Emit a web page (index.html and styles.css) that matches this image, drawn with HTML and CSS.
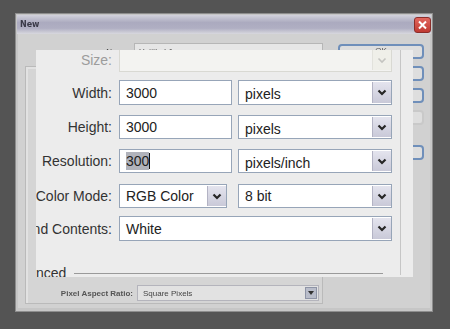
FILE: index.html
```html
<!DOCTYPE html>
<html>
<head>
<meta charset="utf-8">
<link rel="stylesheet" href="styles.css">
</head>
<body>
<div class="window">
  <div class="titlebar">
    <span class="title">New</span>
    <span class="close">
      <svg width="11" height="10" viewBox="0 0 11 10"><path d="M2 1.5 L9 8.5 M9 1.5 L2 8.5" stroke="#fff" stroke-width="2" fill="none"/></svg>
    </span>
  </div>
  <div class="dlg">
    <div class="main">
      <div class="name-row">
        <span class="name-label">Name:</span>
        <span class="name-field">Untitled-1</span>
      </div>
      <div class="group">
        <div class="par-row">
          <span class="par-label">Pixel Aspect Ratio:</span>
          <span class="par-select">Square Pixels<span class="par-arrow"><svg width="6" height="4" viewBox="0 0 6 4"><path d="M0 0 H6 L3 4 Z" fill="#333"/></svg></span></span>
        </div>
      </div>
    </div>
    <div class="buttons">
      <span class="btn">OK</span>
      <span class="btn">Cancel</span>
      <span class="btn">Save Preset...</span>
      <span class="btn btn-off">Delete Preset...</span>
      <span class="btn btn-far">Device Central...</span>
    </div>
  </div>
</div>

<div class="zoom">
  <div class="zoom-inner">
    <div class="row row-size">
      <span class="lbl lbl-off">Size:</span>
      <span class="field field-full field-off"><span class="val"></span><span class="arrow arrow-off"><svg width="10" height="7" viewBox="0 0 10 7"><path d="M1.5 1.5 L5 5 L8.5 1.5" fill="none" stroke="#c4c4c0" stroke-width="1.6"/></svg></span></span>
    </div>
    <div class="row row-width">
      <span class="lbl">Width:</span>
      <span class="field field-in"><span class="val">3000</span></span>
      <span class="field field-sel"><span class="val val-sel">pixels</span><span class="arrow"><svg width="10" height="7" viewBox="0 0 10 7"><path d="M1.5 1.5 L5 5 L8.5 1.5" fill="none" stroke="#262626" stroke-width="2.2"/></svg></span></span>
    </div>
    <div class="row">
      <span class="lbl">Height:</span>
      <span class="field field-in"><span class="val">3000</span></span>
      <span class="field field-sel"><span class="val val-sel">pixels</span><span class="arrow"><svg width="10" height="7" viewBox="0 0 10 7"><path d="M1.5 1.5 L5 5 L8.5 1.5" fill="none" stroke="#262626" stroke-width="2.2"/></svg></span></span>
    </div>
    <div class="row">
      <span class="lbl">Resolution:</span>
      <span class="field field-in"><span class="val"><span class="hl">300</span><span class="caret"></span></span></span>
      <span class="field field-sel"><span class="val val-sel">pixels/inch</span><span class="arrow"><svg width="10" height="7" viewBox="0 0 10 7"><path d="M1.5 1.5 L5 5 L8.5 1.5" fill="none" stroke="#262626" stroke-width="2.2"/></svg></span></span>
    </div>
    <div class="row row-mode">
      <span class="lbl">Color Mode:</span>
      <span class="field field-mode"><span class="val">RGB Color</span><span class="arrow"><svg width="10" height="7" viewBox="0 0 10 7"><path d="M1.5 1.5 L5 5 L8.5 1.5" fill="none" stroke="#262626" stroke-width="2.2"/></svg></span></span>
      <span class="field field-sel"><span class="val">8 bit</span><span class="arrow"><svg width="10" height="7" viewBox="0 0 10 7"><path d="M1.5 1.5 L5 5 L8.5 1.5" fill="none" stroke="#262626" stroke-width="2.2"/></svg></span></span>
    </div>
    <div class="row row-bg">
      <span class="lbl">Background Contents:</span>
      <span class="field field-full"><span class="val">White</span><span class="arrow"><svg width="10" height="7" viewBox="0 0 10 7"><path d="M1.5 1.5 L5 5 L8.5 1.5" fill="none" stroke="#262626" stroke-width="2.2"/></svg></span></span>
    </div>
    <div class="adv">
      <span class="adv-title">Advanced</span>
      <span class="adv-line"></span>
    </div>
  </div>
</div>
</body>
</html>
```

FILE: styles.css
```css
html, body {
  margin: 0;
  padding: 0;
}
body {
  width: 450px;
  height: 329px;
  background: #545454;
  overflow: hidden;
  font-family: "Liberation Sans", Arial, sans-serif;
}

/* background dialog */
.window {
  margin: 13px 0 0 15px;
  width: 416px;
  height: 297px;
  border: 1px solid #8d8d8d;
  background: #c6c6c6;
  display: flex;
  flex-direction: column;
  filter: blur(0.5px);
}
.titlebar {
  height: 19px;
  margin: 1px 1px 0 1px;
  background: linear-gradient(to bottom, #d2d2dc 0%, #abaabf 40%, #b0afc3 70%, #d8d8de 100%);
  display: flex;
  align-items: center;
  justify-content: space-between;
  padding: 0 0 0 3px;
}
.title {
  font-family: "DejaVu Sans", sans-serif;
  font-size: 8px;
  font-weight: bold;
  color: #3a3a48;
}
.close {
  width: 17px;
  height: 16px;
  box-sizing: border-box;
  border: 1px solid #8b2e2a;
  border-radius: 3px;
  background: linear-gradient(to bottom, #e2675f, #c03a33);
  display: flex;
  align-items: center;
  justify-content: center;
}
.dlg {
  flex: 1;
  margin: 0 2px 3px 2px;
  background: #d1d1d1;
  display: flex;
  padding: 9px 6px 0 7px;
  gap: 15px;
}
.main {
  width: 298px;
  display: flex;
  flex-direction: column;
}
.name-row {
  display: flex;
  align-items: center;
  height: 16px;
  font-size: 8px;
  color: #444;
}
.name-label {
  width: 106px;
  text-align: right;
  padding-right: 4px;
}
.name-field {
  width: 191px;
  height: 16px;
  box-sizing: border-box;
  border: 1px solid #b6b6b6;
  background: #e6e6e6;
  padding: 3px 4px;
}
.group {
  margin-top: 7px;
  height: 234px;
  border: 1px solid #bababa;
  box-shadow: inset 2px 2px 0 #e2e2e2;
  background: #d5d5d5;
  display: flex;
  flex-direction: column;
  justify-content: flex-end;
  padding-bottom: 2px;
}
.par-row {
  display: flex;
  align-items: center;
  height: 16px;
  font-size: 8px;
  font-weight: bold;
  color: #555;
}
.par-label {
  width: 107px;
  text-align: right;
  padding-right: 4px;
  white-space: nowrap;
}
.par-select {
  position: relative;
  width: 182px;
  height: 16px;
  box-sizing: border-box;
  border: 1px solid #b4b4bc;
  background: #e2e2e2;
  padding: 3px 5px;
  font-weight: normal;
  color: #444;
}
.par-arrow {
  position: absolute;
  right: 1px;
  top: 1px;
  width: 12px;
  height: 12px;
  background: #b9bdca;
  border: 1px solid #8e94a6;
  box-sizing: border-box;
  display: flex;
  align-items: center;
  justify-content: center;
}
.buttons {
  display: flex;
  flex-direction: column;
  gap: 7px;
  width: 86px;
  padding-top: 1px;
}
.btn {
  height: 15px;
  box-sizing: border-box;
  border: 2px solid #6f8fba;
  border-radius: 4px;
  background: #dedede;
  font-size: 8px;
  color: #555;
  text-align: center;
  line-height: 10px;
}
.btn-off {
  border-color: #c9c9c9;
  color: #aaa;
}
.btn-far {
  margin-top: 13px;
}

/* zoomed overlay panel */
.zoom {
  position: absolute;
  left: 36px;
  top: 50px;
  width: 377px;
  height: 227px;
  background: #ececec;
  overflow: hidden;
}
.zoom-inner {
  width: 364px;
  height: 100%;
  border-right: 1px solid #c6c6c6;
  display: flex;
  flex-direction: column;
  gap: 10px;
  margin-top: -2px;
}
.row {
  display: flex;
  align-items: center;
  height: 24px;
  flex-shrink: 0;
}
.row-width {
  height: 25px;
  margin-top: -2px;
}
.row-mode {
  margin-top: 1px;
}
.row-bg {
  height: 25px;
  margin-top: -2px;
}
.lbl {
  width: 76px;
  flex-shrink: 0;
  display: flex;
  justify-content: flex-end;
  white-space: nowrap;
  font-size: 14px;
  color: #333;
  margin-right: 7px;
}
.lbl-off {
  color: #9c9c9c;
}
.field {
  position: relative;
  height: 100%;
  box-sizing: border-box;
  border: 1px solid #97a5b8;
  background: #fff;
  display: flex;
  align-items: center;
  font-size: 14px;
  color: #222;
}
.field-in {
  width: 113px;
  margin-right: 6px;
}
.field-sel {
  width: 154px;
}
.field-full {
  width: 273px;
}
.field-mode {
  width: 108px;
  margin-right: 11px;
}
.field-off {
  background: #f3f3f1;
  border-color: #d9d9d3;
}
.val {
  padding-left: 6px;
  display: flex;
  align-items: center;
}
.val-sel {
  padding-top: 3px;
}
.hl {
  background: #b1b3bb;
  padding: 1px 0;
}
.caret {
  width: 1px;
  height: 16px;
  background: #111;
}
.arrow {
  position: absolute;
  right: 0;
  top: 1px;
  bottom: 1px;
  width: 18px;
  background: linear-gradient(to bottom, #e4e4ee, #c9c9d8);
  border-left: 1px solid #b3b3c4;
  display: flex;
  align-items: center;
  justify-content: center;
}
.arrow-off {
  background: #efefe9;
  border-left: 1px solid #e2e2dc;
}
.adv {
  display: flex;
  align-items: center;
  margin-top: 14px;
  height: 16px;
}
.adv-title {
  font-size: 14px;
  color: #333;
  margin-left: -32px;
  margin-right: 8px;
  white-space: nowrap;
}
.adv-line {
  width: 309px;
  height: 1px;
  background: #9a9a9a;
}
```
